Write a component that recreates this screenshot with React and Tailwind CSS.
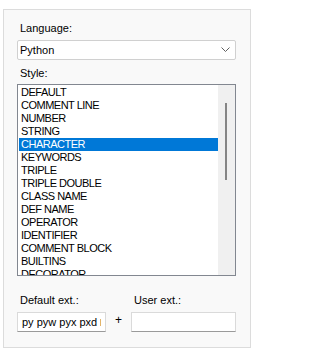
import React from "react";

const styles = [
  "DEFAULT",
  "COMMENT LINE",
  "NUMBER",
  "STRING",
  "CHARACTER",
  "KEYWORDS",
  "TRIPLE",
  "TRIPLE DOUBLE",
  "CLASS NAME",
  "DEF NAME",
  "OPERATOR",
  "IDENTIFIER",
  "COMMENT BLOCK",
  "BUILTINS",
  "DECORATOR",
];

const App = () => {
  return (
    <div
      className="w-[255px] h-[349px] bg-white pt-[9px] pl-[3px] text-black text-[11px]"
      style={{ fontFamily: '"Liberation Sans", Arial, sans-serif' }}
    >
      <div className="w-[248px] h-[339px] border border-[#dcdcdc] bg-[#f9f9f9] pt-[10px] pl-[13px] pr-[14px]">
        <div className="h-[16px] leading-[16px] pl-[3px]">Language:</div>
        <div className="mt-[4px] h-[20px] bg-white border border-[#d0d0d0] rounded-[2px] flex items-center justify-between pl-[2px] pr-[4px]">
          <span className="leading-[18px]">Python</span>
          <svg width="9" height="6" viewBox="0 0 9 6" className="mr-[1px]">
            <path d="M0.5 0.5 L4.5 4.5 L8.5 0.5" fill="none" stroke="#606060" strokeWidth="1" />
          </svg>
        </div>

        <div className="mt-[5px] h-[16px] leading-[16px] pl-[3px]">Style:</div>
        <div className="mt-[3px] h-[192px] bg-white border border-[#828790] flex overflow-hidden">
          <div className="flex-1 pt-[1px] pl-[1px] overflow-hidden">
            {styles.map((s) => (
              <div
                key={s}
                className={
                  "h-[13px] leading-[13px] pl-[2px] tracking-[-0.5px] whitespace-nowrap " +
                  (s === "CHARACTER" ? "bg-[#0078d7] text-white" : "")
                }
              >
                {s}
              </div>
            ))}
          </div>
          <div className="w-[17px] h-full bg-[#f0f0f0] pt-[18px] pl-[7px]">
            <div className="w-[2px] h-[77px] bg-[#858585]" />
          </div>
        </div>

        <div className="mt-[16px] flex">
          <div className="w-[89px]">
            <div className="h-[16px] leading-[16px] pl-[3px] whitespace-nowrap">Default ext.:</div>
            <div className="mt-[4px] h-[20px] bg-white border border-[#dadada] border-b-[#9a9a9a] flex items-center pl-[4px] overflow-hidden whitespace-nowrap">
              <span>py pyw pyx pxd</span>
              <span className="ml-[3px] w-[1px] h-[7px] bg-[#e2b46a] shrink-0" />
            </div>
          </div>
          <div className="w-[25px] flex items-end justify-center h-[40px] pb-[3px] text-[12px]">+</div>
          <div className="w-[105px]">
            <div className="h-[16px] leading-[16px] pl-[3px] whitespace-nowrap">User ext.:</div>
            <div className="mt-[4px] h-[20px] bg-white border border-[#dadada] border-b-[#9a9a9a]" />
          </div>
        </div>
      </div>
    </div>
  );
};

export default App;
